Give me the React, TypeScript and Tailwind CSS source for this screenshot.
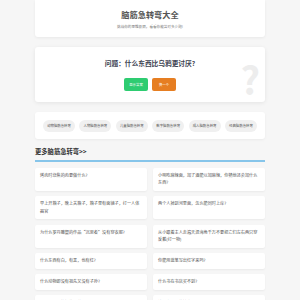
const tags = [
  "动物脑筋急转弯",
  "人物脑筋急转弯",
  "儿童脑筋急转弯",
  "数字脑筋急转弯",
  "成人脑筋急转弯",
  "经典脑筋急转弯",
];

const riddles = [
  "烤肉时烧焦的肉要做什么?",
  "小明吃麻辣面，加了酒能以加麻辣，你猜他还会加什么东西?",
  "早上开箱子，晚上关箱子，箱子里有面镜子，打一人体器官",
  "两个人掉到河里面，怎么能同时上岸?",
  "为什么罗丹雕塑的作品“沉思者”没有穿衣服?",
  "从小跟着主人走遍天涯海角千万不要把它们左右两只穿反戴(打一物)",
  "什么东西有白，有黑，也有红?",
  "你能用蓝笔写出红字来吗?",
  "什么动物即没有祖先又没有子孙?",
  "什么书在书店买不到?",
  "下面下了不能打的是什么?",
  "谁最上最少的地方是哪里?",
];

const App = () => {
  return (
    <div
      className="min-h-[300px] bg-[#f6f6f6] text-[#555]"
      style={{ fontFamily: '"Noto Sans CJK SC", "Noto Sans", sans-serif' }}
    >
      <div className="w-[230px] mx-auto flex flex-col">
        {/* header */}
        <div className="h-[37px] bg-white rounded-b-[3px] shadow-[0_1px_3px_rgba(0,0,0,0.06)] flex flex-col items-center pt-[7px]">
          <h1 className="text-[8.2px] leading-[14px] font-bold text-[#555]">脑筋急转弯大全</h1>
          <p className="text-[3.6px] leading-[6px] mt-[3px] text-[#777]">挑战你的思维极限，看看你能答对多少题!</p>
        </div>

        {/* question */}
        <div className="relative overflow-hidden mt-[10px] h-[55px] bg-white rounded-[3px] shadow-[0_1px_4px_rgba(0,0,0,0.08)] flex flex-col items-center pt-[11px]">
          <h2 className="text-[6.7px] leading-[10px] font-bold text-[#3c4250]">问题：什么东西比乌鸦更讨厌?</h2>
          <div className="flex gap-[4px] mt-[10px]">
            <button className="w-[24px] h-[13px] rounded-[2px] bg-[#2ecc71] text-white text-[3.4px] leading-none">显示答案</button>
            <button className="w-[24px] h-[13px] rounded-[2px] bg-[#e67e22] text-white text-[3.4px] leading-none">换一个</button>
          </div>
          <span className="absolute right-[5px] top-[13px] text-[38px] leading-none font-bold text-[#ededed] select-none">?</span>
        </div>

        {/* tags */}
        <div className="mt-[10px] h-[27px] bg-white rounded-[3px] shadow-[0_1px_3px_rgba(0,0,0,0.05)] flex items-center justify-between px-[8px]">
          {tags.map((t) => (
            <span key={t} className="h-[12px] w-[32px] rounded-full bg-[#f0f0f0] text-[3.4px] text-[#555] flex items-center justify-center">
              {t}
            </span>
          ))}
        </div>

        {/* more */}
        <h3 className="mt-[8px] text-[6.3px] leading-[10px] font-bold text-[#333]">更多脑筋急转弯&gt;&gt;</h3>
        <div className="mt-[3px] h-[1.5px] bg-[#86c5ea]" />

        <div className="mt-[6px] grid grid-cols-2 gap-x-[6px] gap-y-[5.5px]">
          {riddles.map((r, i) => (
            <div key={i} className="bg-white rounded-[2px] shadow-[0_1px_2px_rgba(0,0,0,0.05)] px-[5px] py-[4px] text-[4.15px] leading-[7.5px] text-[#555]">
              {r}
            </div>
          ))}
        </div>
      </div>
    </div>
  );
};

export default App;
